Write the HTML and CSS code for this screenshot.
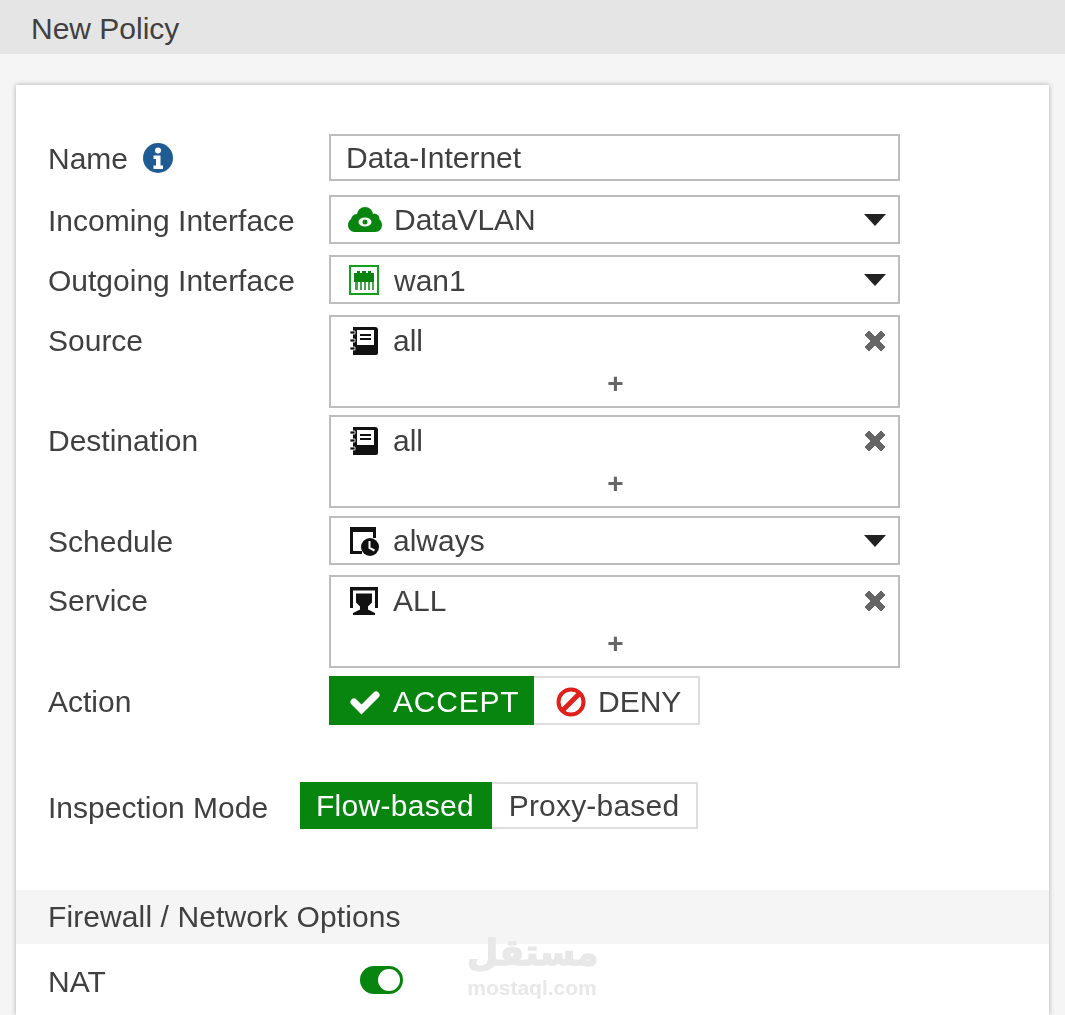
FILE: index.html
```html
<!DOCTYPE html>
<html lang="en">
<head>
<meta charset="utf-8">
<title>New Policy</title>
<link rel="stylesheet" href="styles.css">
</head>
<body>
<header class="page-title">New Policy</header>
<main class="card">
  <form class="form">
    <div class="row row-name">
      <div class="label label-name"><span class="name-text">Name</span>
        <svg class="info" viewBox="0 0 30 30"><circle cx="15" cy="15" r="15" fill="#1f5c94"/><circle cx="15" cy="7.5" r="3" fill="#fff"/><path d="M10.5 12.5h7v10h2.5v3.5h-9.500v-3.500h2.500v-6.500h-2.500z" fill="#fff"/></svg>
      </div>
      <div class="field field-text">Data-Internet</div>
    </div>
    <div class="row row-incoming">
      <div class="label">Incoming Interface</div>
      <div class="field field-select">
        <svg class="icon icon-cloud" viewBox="0 0 34 25"><g fill="#07850f"><circle cx="17" cy="8" r="8"/><circle cx="9" cy="13" r="6"/><circle cx="26" cy="12" r="5.500"/><rect y="11" width="34" height="14" rx="6.500"/></g><ellipse cx="17" cy="15" rx="6.500" ry="4.500" fill="#fff"/><circle cx="17" cy="15" r="2.500" fill="#07850f"/></svg>
        <span class="value value-cloud">DataVLAN</span>
        <svg class="caret" viewBox="0 0 22 12"><path d="M0 0h22L11 12z"/></svg>
      </div>
    </div>
    <div class="row row-outgoing">
      <div class="label">Outgoing Interface</div>
      <div class="field field-select">
        <svg class="icon icon-port" viewBox="0 0 30 30"><rect x="1" y="1" width="28" height="28" fill="#fff" stroke="#15a01c" stroke-width="2"/><path d="M5 8h3v-2h3v2h2v-2h4v2h2v-2h3v2h3v9h-20z" fill="#07850f"/><path d="M6 17h3v8h-3zM11 17h2v8h-2zM15 17h2v8h-2zM19 17h2v8h-2zM23 17h2v8h-2z" fill="#07850f" opacity=".75"/></svg>
        <span class="value value-wan">wan1</span>
        <svg class="caret" viewBox="0 0 22 12"><path d="M0 0h22L11 12z"/></svg>
      </div>
    </div>
    <div class="row row-source">
      <div class="label">Source</div>
      <div class="field field-multi">
        <div class="entry">
          <svg class="icon icon-book" viewBox="0 0 30 30"><use href="#book"/></svg>
          <span class="value value-all">all</span>
          <svg class="remove" viewBox="0 0 22 22"><use href="#cross"/></svg>
        </div>
        <div class="add">+</div>
      </div>
    </div>
    <div class="row row-destination">
      <div class="label">Destination</div>
      <div class="field field-multi">
        <div class="entry">
          <svg class="icon icon-book" viewBox="0 0 30 30"><use href="#book"/></svg>
          <span class="value value-all">all</span>
          <svg class="remove" viewBox="0 0 22 22"><use href="#cross"/></svg>
        </div>
        <div class="add">+</div>
      </div>
    </div>
    <div class="row row-schedule">
      <div class="label">Schedule</div>
      <div class="field field-select">
        <svg class="icon icon-clock" viewBox="0 0 30 30"><path d="M1 1h26v5H4v19h9v3H1z" fill="#111"/><path d="M24 6h3v6h-3z" fill="#111"/><circle cx="21" cy="21" r="9" fill="#111"/><path d="M20.500 15v7l5 2.500" fill="none" stroke="#fff" stroke-width="2"/></svg>
        <span class="value">always</span>
        <svg class="caret" viewBox="0 0 22 12"><path d="M0 0h22L11 12z"/></svg>
      </div>
    </div>
    <div class="row row-service">
      <div class="label">Service</div>
      <div class="field field-multi">
        <div class="entry">
          <svg class="icon icon-service" viewBox="0 0 30 30"><path d="M1 1h28v21h-3V4.500H4V22H1z" fill="#111"/><path d="M7 7.500h16v9l-4 4v3l7 3.500v2H4v-2l7-3.500v-3l-4-4z" fill="#111"/></svg>
          <span class="value value-service">ALL</span>
          <svg class="remove" viewBox="0 0 22 22"><use href="#cross"/></svg>
        </div>
        <div class="add">+</div>
      </div>
    </div>
    <div class="row row-action">
      <div class="label">Action</div>
      <div class="segmented">
        <div class="segment segment-on segment-accept">
          <svg class="seg-icon" viewBox="0 0 30 24"><path d="M4 12l7.500 7.500L26 5" fill="none" stroke="#fff" stroke-width="7" stroke-linecap="round"/></svg>ACCEPT
        </div>
        <div class="segment segment-deny">
          <svg class="seg-icon seg-icon-deny" viewBox="0 0 30 30"><circle cx="15" cy="15" r="12.500" fill="none" stroke="#e0201a" stroke-width="4"/><path d="M7 23L23 7" stroke="#e0201a" stroke-width="5"/></svg>DENY
        </div>
      </div>
    </div>
    <div class="row row-inspection">
      <div class="label label-inspection">Inspection Mode</div>
      <div class="segmented segmented-short">
        <div class="segment segment-on segment-flow">Flow-based</div>
        <div class="segment segment-proxy">Proxy-based</div>
      </div>
    </div>
  </form>
  <h2 class="section-title">Firewall / Network Options</h2>
  <div class="row row-nat">
    <div class="label label-nat">NAT</div>
    <span class="toggle"><span class="knob"></span></span>
  </div>
</main>
<div class="watermark" lang="ar"><div class="wm-ar">مستقل</div><div class="wm-en">mostaql.com</div></div>
<svg class="defs" aria-hidden="true">
  <defs>
    <g id="book"><path d="M4 1h22a3 3 0 0 1 3 3v23a2 2 0 0 1-2 2H4z" fill="#111"/><path d="M8 4h17v15H8z" fill="#fff"/><path d="M11 8h11v2H11zM11 12h11v2H11z" fill="#111"/><path d="M1 5h5v3H1zM1 13h5v3H1zM1 21h5v3H1z" fill="#111" stroke="#fff" stroke-width=".8"/></g>
    <path id="cross" d="M5 1l6 6 6-6 4 4-6 6 6 6-4 4-6-6-6 6-4-4 6-6-6-6z" fill="#666" stroke="#666" stroke-linejoin="round"/>
  </defs>
</svg>
</body>
</html>
```
FILE: styles.css
```css
html, body { margin: 0; padding: 0; }
body {
  background: #f5f5f5;
  color: #404040;
  font-family: "Liberation Sans", Arial, sans-serif;
  font-size: 30px;
  height: 1015px;
  overflow: hidden;
  position: relative;
  filter: blur(0.45px);
}
.page-title {
  background: #e5e5e5;
  height: 54px;
  line-height: 57px;
  padding-left: 31px;
  box-sizing: border-box;
}
.card {
  background: #fff;
  margin: 31px 16px 0;
  box-shadow: 0 0 5px rgba(0,0,0,.3);
  padding-top: 49px;
  height: 930px;
  box-sizing: border-box;
  overflow: hidden;
}
.row { display: flex; align-items: flex-start; }
.label { width: 282px; height: 47px; padding-left: 32px; box-sizing: border-box; flex: none; white-space: nowrap; line-height: 52px; }
.label-name { display: flex; align-items: center; gap: 15px; }
.name-text { position: relative; top: 1px; }
.info { width: 30px; height: 30px; margin-top: 1px; }
.field {
  width: 571px;
  box-sizing: border-box;
  border: 2px solid #bdbdbd;
  background: #fff;
  margin-left: 31px;
}
.field-text { height: 47px; line-height: 44px; padding-left: 15px; }
.field-select { height: 49px; display: flex; align-items: center; padding: 0 12px 0 18px; }
.field-multi { height: 93px; padding: 0 12px 0 18px; }
.row-incoming { margin-top: 14px; }
.row-outgoing { margin-top: 11px; }
.row-source { margin-top: 11px; }
.row-destination { margin-top: 7px; }
.row-schedule { margin-top: 8px; }
.row-service { margin-top: 10px; }
.row-action { margin-top: 8px; }
.row-inspection { margin-top: 57px; }
.row-nat { margin-top: 12px; }
.icon { width: 30px; height: 30px; flex: none; }
.icon-cloud { width: 34px; height: 25px; margin-left: -1px; }
.value { margin-left: 14px; line-height: 46px; }
.value-cloud { margin-left: 12px; }
.value-wan { margin-left: 15px; position: relative; top: 1px; }
.caret { width: 22px; height: 12px; margin-left: auto; fill: #222; }
.entry { display: flex; align-items: center; height: 47px; }
.remove { width: 22px; height: 22px; margin-left: auto; }
.add { text-align: center; font-size: 28px; font-weight: 700; line-height: 34px; color: #666; margin-top: 3px; padding-right: 4px; }
.segmented { display: flex; margin-left: 31px; height: 49px; }
.segmented-short { margin-left: 2px; height: 47px; }
.segment {
  box-sizing: border-box;
  border: 2px solid #ddd;
  border-left: 0;
  display: flex;
  align-items: center;
  justify-content: center;
  background: #fff;
}
.segment-on { background: #07850f; border-color: #07850f; color: #fff; }
.segment-accept { width: 205px; letter-spacing: .8px; justify-content: flex-start; padding: 2px 0 0 21px; }
.segment-deny { width: 166px; justify-content: flex-start; padding: 2px 0 0 22px; }
.segment-flow { width: 192px; letter-spacing: .3px; padding-top: 1px; }
.segment-proxy { width: 206px; letter-spacing: .2px; padding-top: 1px; }
.seg-icon { width: 30px; height: 30px; margin-right: 13px; flex: none; }
.seg-icon-deny { margin-right: 12px; }
.section-title {
  background: #f5f5f5;
  font: inherit;
  letter-spacing: .1px;
  margin: 61px 0 0;
  height: 54px;
  line-height: 53px;
  padding-left: 32px;
}
.toggle {
  display: block;
  width: 43px;
  height: 28px;
  border-radius: 14px;
  background: #07850f;
  margin: 10px 0 0 62px;
  position: relative;
}
.knob { position: absolute; right: 3px; top: 3px; width: 22px; height: 22px; border-radius: 50%; background: #fff; }
.watermark { position: absolute; left: 467px; top: 929px; width: 130px; text-align: center; color: #e8e8e8; font-weight: 700; }
.wm-ar { font-family: "DejaVu Sans", sans-serif; font-size: 36px; line-height: 48px; white-space: nowrap; -webkit-text-stroke: 1.5px #e8e8e8; }
.wm-en { font-family: "Liberation Sans", sans-serif; font-size: 21px; line-height: 22px; }
.defs { position: absolute; width: 0; height: 0; }
```
